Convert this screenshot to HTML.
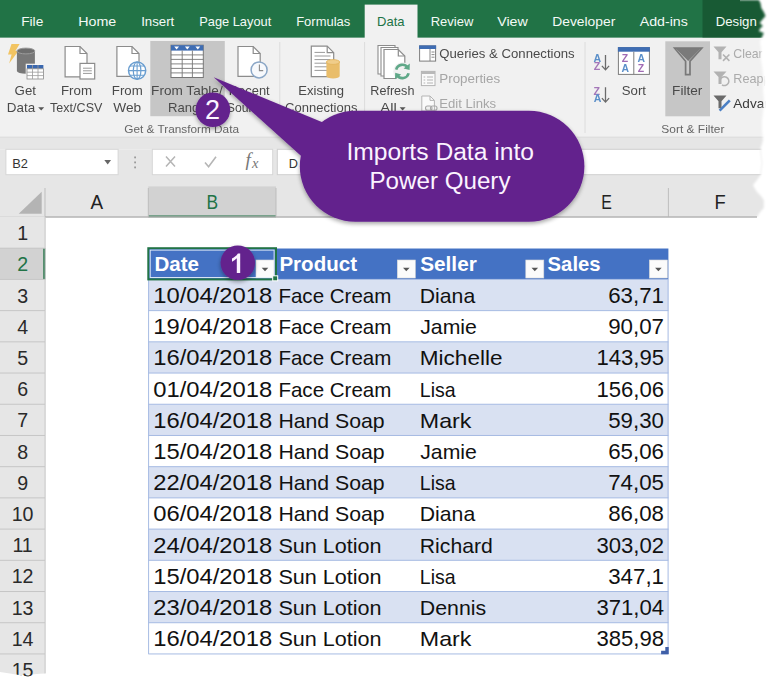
<!DOCTYPE html>
<html><head><meta charset="utf-8"><title>Excel - From Table/Range</title>
<style>
html,body{margin:0;padding:0;background:#fff;}
body{width:768px;height:684px;overflow:hidden;font-family:"Liberation Sans",sans-serif;}
svg{display:block;font-family:"Liberation Sans",sans-serif;}
</style></head><body>
<svg width="768" height="684" viewBox="0 0 768 684">
<defs><clipPath id="torn"><path d="M0,0 L758.8,0 L760.5,3 L761.3,8 L763.8,12 L765.5,16 L762,20 L759.7,23 L763,26 L760.5,28 L758.8,31 L763.8,33 L762,37 L760,42 L761.2,50 L760.6,58 L762,66 L763,74 L763.6,82 L763,90 L764,100 L763.4,110 L762,120 L762,130 L763,140 L762,144 L760.5,148 L761,156 L762,163 L761,170 L760.5,175 L757,180 L753,185 L754.5,188 L757,192 L761,196 L763.8,200 L763.8,208 L761,211 L758.8,214 L757,217.5 L0,217.5 Z"/></clipPath><filter id="eb" x="-5%" y="-5%" width="110%" height="110%"><feGaussianBlur stdDeviation="1.1"/></filter><mask id="tornm" maskUnits="userSpaceOnUse" x="0" y="0" width="768" height="684"><rect x="0" y="0" width="740" height="217.5" fill="#fff"/><path d="M0,0 L758.8,0 L760.5,3 L761.3,8 L763.8,12 L765.5,16 L762,20 L759.7,23 L763,26 L760.5,28 L758.8,31 L763.8,33 L762,37 L760,42 L761.2,50 L760.6,58 L762,66 L763,74 L763.6,82 L763,90 L764,100 L763.4,110 L762,120 L762,130 L763,140 L762,144 L760.5,148 L761,156 L762,163 L761,170 L760.5,175 L757,180 L753,185 L754.5,188 L757,192 L761,196 L763.8,200 L763.8,208 L761,211 L758.8,214 L757,217.5 L0,217.5 Z" fill="#fff" filter="url(#eb)"/></mask><filter id="sh" x="-20%" y="-20%" width="140%" height="150%"><feGaussianBlur in="SourceAlpha" stdDeviation="2.2"/><feOffset dx="0" dy="2"/><feComponentTransfer><feFuncA type="linear" slope="0.36"/></feComponentTransfer><feMerge><feMergeNode/><feMergeNode in="SourceGraphic"/></feMerge></filter><filter id="soft"><feGaussianBlur stdDeviation="0.35"/></filter></defs>
<rect x="0.00" y="0.00" width="768.00" height="684.00" fill="#fff" />
<g mask="url(#tornm)">
<rect x="0.00" y="0.00" width="768.00" height="37.80" fill="#217346" />
<rect x="702.50" y="0.00" width="70.00" height="37.80" fill="#185a34" />
<rect x="0.00" y="37.80" width="768.00" height="99.00" fill="#f1f1f1" />
<rect x="364.70" y="4.60" width="52.80" height="34.00" fill="#f1f1f1" />
<rect x="0.00" y="136.70" width="768.00" height="12.60" fill="#e6e6e6" />
<line x1="0.00" y1="137.20" x2="768.00" y2="137.20" stroke="#dcdcdc" stroke-width="1" />
<rect x="0.00" y="149.30" width="768.00" height="25.70" fill="#e6e6e6" />
<rect x="0.00" y="175.00" width="768.00" height="42.20" fill="#e6e6e6" />
</g>
<text x="21.20" y="25.60" font-size="12.6" fill="#f4faf6" font-weight="normal" text-anchor="start" textLength="22.10" lengthAdjust="spacingAndGlyphs" >File</text>
<text x="78.20" y="25.60" font-size="12.6" fill="#f4faf6" font-weight="normal" text-anchor="start" textLength="38.10" lengthAdjust="spacingAndGlyphs" >Home</text>
<text x="141.20" y="25.60" font-size="12.6" fill="#f4faf6" font-weight="normal" text-anchor="start" textLength="33.10" lengthAdjust="spacingAndGlyphs" >Insert</text>
<text x="199.20" y="25.60" font-size="12.6" fill="#f4faf6" font-weight="normal" text-anchor="start" textLength="72.10" lengthAdjust="spacingAndGlyphs" >Page Layout</text>
<text x="296.20" y="25.60" font-size="12.6" fill="#f4faf6" font-weight="normal" text-anchor="start" textLength="54.10" lengthAdjust="spacingAndGlyphs" >Formulas</text>
<text x="430.70" y="25.60" font-size="12.6" fill="#f4faf6" font-weight="normal" text-anchor="start" textLength="42.60" lengthAdjust="spacingAndGlyphs" >Review</text>
<text x="497.20" y="25.60" font-size="12.6" fill="#f4faf6" font-weight="normal" text-anchor="start" textLength="30.60" lengthAdjust="spacingAndGlyphs" >View</text>
<text x="552.20" y="25.60" font-size="12.6" fill="#f4faf6" font-weight="normal" text-anchor="start" textLength="63.10" lengthAdjust="spacingAndGlyphs" >Developer</text>
<text x="639.70" y="25.60" font-size="12.6" fill="#f4faf6" font-weight="normal" text-anchor="start" textLength="48.10" lengthAdjust="spacingAndGlyphs" >Add-ins</text>
<text x="715.70" y="25.60" font-size="12.6" fill="#f4faf6" font-weight="normal" text-anchor="start" textLength="41.10" lengthAdjust="spacingAndGlyphs" >Design</text>
<text x="377.00" y="25.60" font-size="12.6" fill="#217346" font-weight="normal" text-anchor="start" textLength="27.50" lengthAdjust="spacingAndGlyphs" >Data</text>
<rect x="5.90" y="149.30" width="112.20" height="25.40" fill="#fff" stroke="#d6d6d6" stroke-width="1"/>
<text x="12.30" y="167.50" font-size="12.4" fill="#333" font-weight="normal" text-anchor="start" textLength="15.70" lengthAdjust="spacingAndGlyphs" >B2</text>
<path d="M104.3,160 l6.8,0 l-3.4,4.4z" fill="#666"/>
<rect x="134.20" y="156.50" width="1.80" height="1.80" fill="#9a9a9a" />
<rect x="134.20" y="161.50" width="1.80" height="1.80" fill="#9a9a9a" />
<rect x="134.20" y="166.50" width="1.80" height="1.80" fill="#9a9a9a" />
<rect x="152.30" y="149.30" width="120.40" height="25.40" fill="#fff" stroke="#d6d6d6" stroke-width="1"/>
<path d="M166,156.5 l9,10 M175,156.5 l-9,10" stroke="#b5b5b5" stroke-width="1.5" fill="none"/>
<path d="M205,162.5 l3.6,4.2 l7.4,-10" stroke="#b5b5b5" stroke-width="1.6" fill="none"/>
<text x="245.60" y="166.40" font-size="19" fill="#777" font-weight="normal" text-anchor="start"  font-style="italic" font-family="Liberation Serif">f</text>
<text x="252.00" y="167.80" font-size="14.5" fill="#777" font-weight="normal" text-anchor="start"  font-style="italic" font-family="Liberation Serif">x</text>
<g mask="url(#tornm)">
<rect x="277.30" y="149.30" width="500.00" height="25.40" fill="#fff" stroke="#cfcfcf" stroke-width="1"/>
</g>
<text x="288.80" y="167.50" font-size="12.4" fill="#333" font-weight="normal" text-anchor="start" textLength="9.20" lengthAdjust="spacingAndGlyphs" >D</text>
<rect x="148.30" y="186.40" width="127.70" height="30.80" fill="#d2d2d2" />
<line x1="148.30" y1="216.40" x2="276.00" y2="216.40" stroke="#217346" stroke-width="1.7" />
<line x1="45.00" y1="188.00" x2="45.00" y2="217.00" stroke="#bdbdbd" stroke-width="1" />
<line x1="148.30" y1="188.00" x2="148.30" y2="217.00" stroke="#bdbdbd" stroke-width="1" />
<line x1="276.00" y1="188.00" x2="276.00" y2="217.00" stroke="#bdbdbd" stroke-width="1" />
<line x1="416.50" y1="188.00" x2="416.50" y2="217.00" stroke="#bdbdbd" stroke-width="1" />
<line x1="543.50" y1="188.00" x2="543.50" y2="217.00" stroke="#bdbdbd" stroke-width="1" />
<line x1="668.40" y1="188.00" x2="668.40" y2="217.00" stroke="#bdbdbd" stroke-width="1" />
<line x1="0.00" y1="217.00" x2="45.00" y2="217.00" stroke="#d0d0d0" stroke-width="1" />
<line x1="45.00" y1="217.00" x2="757.00" y2="217.00" stroke="#b4b4b4" stroke-width="1.3" />
<path d="M41.7,191.7 L41.7,213.8 L18.7,213.8 Z" fill="#b4b4b4"/>
<text x="90.60" y="209.10" font-size="20" fill="#222" font-weight="normal" text-anchor="start" textLength="12.60" lengthAdjust="spacingAndGlyphs" >A</text>
<text x="206.50" y="209.10" font-size="20" fill="#217346" font-weight="normal" text-anchor="start" textLength="11.60" lengthAdjust="spacingAndGlyphs" >B</text>
<text x="601.30" y="209.10" font-size="20" fill="#222" font-weight="normal" text-anchor="start" textLength="10.60" lengthAdjust="spacingAndGlyphs" >E</text>
<text x="714.50" y="209.10" font-size="20" fill="#222" font-weight="normal" text-anchor="start" textLength="11.20" lengthAdjust="spacingAndGlyphs" >F</text>
<path d="M0,217 L45.3,217 L45.3,673.4 L40,673.8 L34,674.2 L28,674.6 L22,675 L16,674.4 L10,673.6 L5,672.8 L0,672 Z" fill="#e6e6e6"/>
<rect x="0.00" y="248.21" width="45.00" height="31.21" fill="#d2d2d2" />
<line x1="44.30" y1="248.21" x2="44.30" y2="279.42" stroke="#217346" stroke-width="2" />
<line x1="0.00" y1="248.21" x2="45.00" y2="248.21" stroke="#c6c6c6" stroke-width="1" />
<line x1="0.00" y1="279.42" x2="45.00" y2="279.42" stroke="#c6c6c6" stroke-width="1" />
<line x1="0.00" y1="310.63" x2="45.00" y2="310.63" stroke="#c6c6c6" stroke-width="1" />
<line x1="0.00" y1="341.84" x2="45.00" y2="341.84" stroke="#c6c6c6" stroke-width="1" />
<line x1="0.00" y1="373.05" x2="45.00" y2="373.05" stroke="#c6c6c6" stroke-width="1" />
<line x1="0.00" y1="404.26" x2="45.00" y2="404.26" stroke="#c6c6c6" stroke-width="1" />
<line x1="0.00" y1="435.47" x2="45.00" y2="435.47" stroke="#c6c6c6" stroke-width="1" />
<line x1="0.00" y1="466.68" x2="45.00" y2="466.68" stroke="#c6c6c6" stroke-width="1" />
<line x1="0.00" y1="497.89" x2="45.00" y2="497.89" stroke="#c6c6c6" stroke-width="1" />
<line x1="0.00" y1="529.10" x2="45.00" y2="529.10" stroke="#c6c6c6" stroke-width="1" />
<line x1="0.00" y1="560.31" x2="45.00" y2="560.31" stroke="#c6c6c6" stroke-width="1" />
<line x1="0.00" y1="591.52" x2="45.00" y2="591.52" stroke="#c6c6c6" stroke-width="1" />
<line x1="0.00" y1="622.73" x2="45.00" y2="622.73" stroke="#c6c6c6" stroke-width="1" />
<line x1="0.00" y1="653.94" x2="45.00" y2="653.94" stroke="#c6c6c6" stroke-width="1" />
<line x1="45.10" y1="217.00" x2="45.10" y2="673.40" stroke="#c6c6c6" stroke-width="1" />
<text x="22.60" y="240.10" font-size="19.6" fill="#2a2a2a" font-weight="normal" text-anchor="middle"  >1</text>
<text x="22.60" y="271.31" font-size="19.6" fill="#217346" font-weight="normal" text-anchor="middle"  >2</text>
<text x="22.60" y="302.52" font-size="19.6" fill="#2a2a2a" font-weight="normal" text-anchor="middle"  >3</text>
<text x="22.60" y="333.73" font-size="19.6" fill="#2a2a2a" font-weight="normal" text-anchor="middle"  >4</text>
<text x="22.60" y="364.94" font-size="19.6" fill="#2a2a2a" font-weight="normal" text-anchor="middle"  >5</text>
<text x="22.60" y="396.15" font-size="19.6" fill="#2a2a2a" font-weight="normal" text-anchor="middle"  >6</text>
<text x="22.60" y="427.36" font-size="19.6" fill="#2a2a2a" font-weight="normal" text-anchor="middle"  >7</text>
<text x="22.60" y="458.57" font-size="19.6" fill="#2a2a2a" font-weight="normal" text-anchor="middle"  >8</text>
<text x="22.60" y="489.78" font-size="19.6" fill="#2a2a2a" font-weight="normal" text-anchor="middle"  >9</text>
<text x="22.60" y="520.99" font-size="19.6" fill="#2a2a2a" font-weight="normal" text-anchor="middle"  >10</text>
<text x="22.60" y="552.20" font-size="19.6" fill="#2a2a2a" font-weight="normal" text-anchor="middle"  >11</text>
<text x="22.60" y="583.41" font-size="19.6" fill="#2a2a2a" font-weight="normal" text-anchor="middle"  >12</text>
<text x="22.60" y="614.62" font-size="19.6" fill="#2a2a2a" font-weight="normal" text-anchor="middle"  >13</text>
<text x="22.60" y="645.83" font-size="19.6" fill="#2a2a2a" font-weight="normal" text-anchor="middle"  >14</text>
<clipPath id="botclip"><path d="M0,640 H60 V673.6 L34,675 L28,676.6 L22,675.6 L10,673.6 L0,672 Z"/></clipPath>
<g clip-path="url(#botclip)">
<text x="22.60" y="677.04" font-size="19.6" fill="#2a2a2a" font-weight="normal" text-anchor="middle"  >15</text>
</g>
<rect x="148.30" y="248.51" width="520.10" height="30.91" fill="#4472c4" />
<rect x="148.30" y="279.42" width="520.10" height="31.21" fill="#d9e1f2" />
<rect x="148.30" y="341.84" width="520.10" height="31.21" fill="#d9e1f2" />
<rect x="148.30" y="404.26" width="520.10" height="31.21" fill="#d9e1f2" />
<rect x="148.30" y="466.68" width="520.10" height="31.21" fill="#d9e1f2" />
<rect x="148.30" y="529.10" width="520.10" height="31.21" fill="#d9e1f2" />
<rect x="148.30" y="591.52" width="520.10" height="31.21" fill="#d9e1f2" />
<line x1="148.30" y1="279.42" x2="668.40" y2="279.42" stroke="#a6bbe3" stroke-width="1" />
<line x1="148.30" y1="310.63" x2="668.40" y2="310.63" stroke="#a6bbe3" stroke-width="1" />
<line x1="148.30" y1="341.84" x2="668.40" y2="341.84" stroke="#a6bbe3" stroke-width="1" />
<line x1="148.30" y1="373.05" x2="668.40" y2="373.05" stroke="#a6bbe3" stroke-width="1" />
<line x1="148.30" y1="404.26" x2="668.40" y2="404.26" stroke="#a6bbe3" stroke-width="1" />
<line x1="148.30" y1="435.47" x2="668.40" y2="435.47" stroke="#a6bbe3" stroke-width="1" />
<line x1="148.30" y1="466.68" x2="668.40" y2="466.68" stroke="#a6bbe3" stroke-width="1" />
<line x1="148.30" y1="497.89" x2="668.40" y2="497.89" stroke="#a6bbe3" stroke-width="1" />
<line x1="148.30" y1="529.10" x2="668.40" y2="529.10" stroke="#a6bbe3" stroke-width="1" />
<line x1="148.30" y1="560.31" x2="668.40" y2="560.31" stroke="#a6bbe3" stroke-width="1" />
<line x1="148.30" y1="591.52" x2="668.40" y2="591.52" stroke="#a6bbe3" stroke-width="1" />
<line x1="148.30" y1="622.73" x2="668.40" y2="622.73" stroke="#a6bbe3" stroke-width="1" />
<line x1="148.30" y1="653.94" x2="668.40" y2="653.94" stroke="#a6bbe3" stroke-width="1" />
<line x1="148.60" y1="279.42" x2="148.60" y2="653.94" stroke="#a6bbe3" stroke-width="1" />
<line x1="668.10" y1="279.42" x2="668.10" y2="653.94" stroke="#a6bbe3" stroke-width="1" />
<text x="154.40" y="271.11" font-size="20.6" fill="#fff" font-weight="bold" text-anchor="start" textLength="44.60" lengthAdjust="spacingAndGlyphs" >Date</text>
<text x="279.40" y="271.11" font-size="20.6" fill="#fff" font-weight="bold" text-anchor="start" textLength="77.60" lengthAdjust="spacingAndGlyphs" >Product</text>
<text x="420.20" y="271.11" font-size="20.6" fill="#fff" font-weight="bold" text-anchor="start" textLength="56.60" lengthAdjust="spacingAndGlyphs" >Seller</text>
<text x="547.60" y="271.11" font-size="20.6" fill="#fff" font-weight="bold" text-anchor="start" textLength="53.00" lengthAdjust="spacingAndGlyphs" >Sales</text>
<rect x="256.00" y="260.01" width="18.00" height="18.00" fill="#fbfbfb" stroke="#d9d9d9" stroke-width="0.6"/>
<path d="M261.70,267.71 l6.6,0 l-3.3,3.6 z" fill="#555"/>
<rect x="397.30" y="260.01" width="18.00" height="18.00" fill="#fbfbfb" stroke="#d9d9d9" stroke-width="0.6"/>
<path d="M403.00,267.71 l6.6,0 l-3.3,3.6 z" fill="#555"/>
<rect x="525.80" y="260.01" width="18.00" height="18.00" fill="#fbfbfb" stroke="#d9d9d9" stroke-width="0.6"/>
<path d="M531.50,267.71 l6.6,0 l-3.3,3.6 z" fill="#555"/>
<rect x="649.40" y="260.01" width="18.00" height="18.00" fill="#fbfbfb" stroke="#d9d9d9" stroke-width="0.6"/>
<path d="M655.10,267.71 l6.6,0 l-3.3,3.6 z" fill="#555"/>
<text x="153.20" y="303.02" font-size="21.5" fill="#111" font-weight="normal" text-anchor="start" textLength="119.00" lengthAdjust="spacingAndGlyphs" >10/04/2018</text>
<text x="278.40" y="302.92" font-size="20.4" fill="#111" font-weight="normal" text-anchor="start" textLength="113.00" lengthAdjust="spacingAndGlyphs" >Face Cream</text>
<text x="419.80" y="302.92" font-size="20.4" fill="#111" font-weight="normal" text-anchor="start" textLength="55.40" lengthAdjust="spacingAndGlyphs" >Diana</text>
<text x="664.00" y="303.02" font-size="21.5" fill="#111" font-weight="normal" text-anchor="end" textLength="55.80" lengthAdjust="spacingAndGlyphs" >63,71</text>
<text x="153.20" y="334.23" font-size="21.5" fill="#111" font-weight="normal" text-anchor="start" textLength="119.00" lengthAdjust="spacingAndGlyphs" >19/04/2018</text>
<text x="278.40" y="334.13" font-size="20.4" fill="#111" font-weight="normal" text-anchor="start" textLength="113.00" lengthAdjust="spacingAndGlyphs" >Face Cream</text>
<text x="420.20" y="334.13" font-size="20.4" fill="#111" font-weight="normal" text-anchor="start" textLength="56.70" lengthAdjust="spacingAndGlyphs" >Jamie</text>
<text x="664.00" y="334.23" font-size="21.5" fill="#111" font-weight="normal" text-anchor="end" textLength="55.80" lengthAdjust="spacingAndGlyphs" >90,07</text>
<text x="153.20" y="365.44" font-size="21.5" fill="#111" font-weight="normal" text-anchor="start" textLength="119.00" lengthAdjust="spacingAndGlyphs" >16/04/2018</text>
<text x="278.40" y="365.34" font-size="20.4" fill="#111" font-weight="normal" text-anchor="start" textLength="113.00" lengthAdjust="spacingAndGlyphs" >Face Cream</text>
<text x="419.80" y="365.34" font-size="20.4" fill="#111" font-weight="normal" text-anchor="start" textLength="82.70" lengthAdjust="spacingAndGlyphs" >Michelle</text>
<text x="664.00" y="365.44" font-size="21.5" fill="#111" font-weight="normal" text-anchor="end" textLength="67.60" lengthAdjust="spacingAndGlyphs" >143,95</text>
<text x="153.20" y="396.65" font-size="21.5" fill="#111" font-weight="normal" text-anchor="start" textLength="119.00" lengthAdjust="spacingAndGlyphs" >01/04/2018</text>
<text x="278.40" y="396.55" font-size="20.4" fill="#111" font-weight="normal" text-anchor="start" textLength="113.00" lengthAdjust="spacingAndGlyphs" >Face Cream</text>
<text x="419.80" y="396.55" font-size="20.4" fill="#111" font-weight="normal" text-anchor="start" textLength="35.80" lengthAdjust="spacingAndGlyphs" >Lisa</text>
<text x="664.00" y="396.65" font-size="21.5" fill="#111" font-weight="normal" text-anchor="end" textLength="67.60" lengthAdjust="spacingAndGlyphs" >156,06</text>
<text x="153.20" y="427.86" font-size="21.5" fill="#111" font-weight="normal" text-anchor="start" textLength="119.00" lengthAdjust="spacingAndGlyphs" >16/04/2018</text>
<text x="278.40" y="427.76" font-size="20.4" fill="#111" font-weight="normal" text-anchor="start" textLength="106.30" lengthAdjust="spacingAndGlyphs" >Hand Soap</text>
<text x="419.80" y="427.76" font-size="20.4" fill="#111" font-weight="normal" text-anchor="start" textLength="51.60" lengthAdjust="spacingAndGlyphs" >Mark</text>
<text x="664.00" y="427.86" font-size="21.5" fill="#111" font-weight="normal" text-anchor="end" textLength="55.80" lengthAdjust="spacingAndGlyphs" >59,30</text>
<text x="153.20" y="459.07" font-size="21.5" fill="#111" font-weight="normal" text-anchor="start" textLength="119.00" lengthAdjust="spacingAndGlyphs" >15/04/2018</text>
<text x="278.40" y="458.97" font-size="20.4" fill="#111" font-weight="normal" text-anchor="start" textLength="106.30" lengthAdjust="spacingAndGlyphs" >Hand Soap</text>
<text x="420.20" y="458.97" font-size="20.4" fill="#111" font-weight="normal" text-anchor="start" textLength="56.70" lengthAdjust="spacingAndGlyphs" >Jamie</text>
<text x="664.00" y="459.07" font-size="21.5" fill="#111" font-weight="normal" text-anchor="end" textLength="55.80" lengthAdjust="spacingAndGlyphs" >65,06</text>
<text x="153.20" y="490.28" font-size="21.5" fill="#111" font-weight="normal" text-anchor="start" textLength="119.00" lengthAdjust="spacingAndGlyphs" >22/04/2018</text>
<text x="278.40" y="490.18" font-size="20.4" fill="#111" font-weight="normal" text-anchor="start" textLength="106.30" lengthAdjust="spacingAndGlyphs" >Hand Soap</text>
<text x="419.80" y="490.18" font-size="20.4" fill="#111" font-weight="normal" text-anchor="start" textLength="35.80" lengthAdjust="spacingAndGlyphs" >Lisa</text>
<text x="664.00" y="490.28" font-size="21.5" fill="#111" font-weight="normal" text-anchor="end" textLength="55.80" lengthAdjust="spacingAndGlyphs" >74,05</text>
<text x="153.20" y="521.49" font-size="21.5" fill="#111" font-weight="normal" text-anchor="start" textLength="119.00" lengthAdjust="spacingAndGlyphs" >06/04/2018</text>
<text x="278.40" y="521.39" font-size="20.4" fill="#111" font-weight="normal" text-anchor="start" textLength="106.30" lengthAdjust="spacingAndGlyphs" >Hand Soap</text>
<text x="419.80" y="521.39" font-size="20.4" fill="#111" font-weight="normal" text-anchor="start" textLength="55.40" lengthAdjust="spacingAndGlyphs" >Diana</text>
<text x="664.00" y="521.49" font-size="21.5" fill="#111" font-weight="normal" text-anchor="end" textLength="55.80" lengthAdjust="spacingAndGlyphs" >86,08</text>
<text x="153.20" y="552.70" font-size="21.5" fill="#111" font-weight="normal" text-anchor="start" textLength="119.00" lengthAdjust="spacingAndGlyphs" >24/04/2018</text>
<text x="278.40" y="552.60" font-size="20.4" fill="#111" font-weight="normal" text-anchor="start" textLength="103.20" lengthAdjust="spacingAndGlyphs" >Sun Lotion</text>
<text x="419.80" y="552.60" font-size="20.4" fill="#111" font-weight="normal" text-anchor="start" textLength="73.00" lengthAdjust="spacingAndGlyphs" >Richard</text>
<text x="664.00" y="552.70" font-size="21.5" fill="#111" font-weight="normal" text-anchor="end" textLength="67.60" lengthAdjust="spacingAndGlyphs" >303,02</text>
<text x="153.20" y="583.91" font-size="21.5" fill="#111" font-weight="normal" text-anchor="start" textLength="119.00" lengthAdjust="spacingAndGlyphs" >15/04/2018</text>
<text x="278.40" y="583.81" font-size="20.4" fill="#111" font-weight="normal" text-anchor="start" textLength="103.20" lengthAdjust="spacingAndGlyphs" >Sun Lotion</text>
<text x="419.80" y="583.81" font-size="20.4" fill="#111" font-weight="normal" text-anchor="start" textLength="35.80" lengthAdjust="spacingAndGlyphs" >Lisa</text>
<text x="664.00" y="583.91" font-size="21.5" fill="#111" font-weight="normal" text-anchor="end" textLength="55.80" lengthAdjust="spacingAndGlyphs" >347,1</text>
<text x="153.20" y="615.12" font-size="21.5" fill="#111" font-weight="normal" text-anchor="start" textLength="119.00" lengthAdjust="spacingAndGlyphs" >23/04/2018</text>
<text x="278.40" y="615.02" font-size="20.4" fill="#111" font-weight="normal" text-anchor="start" textLength="103.20" lengthAdjust="spacingAndGlyphs" >Sun Lotion</text>
<text x="419.80" y="615.02" font-size="20.4" fill="#111" font-weight="normal" text-anchor="start" textLength="66.40" lengthAdjust="spacingAndGlyphs" >Dennis</text>
<text x="664.00" y="615.12" font-size="21.5" fill="#111" font-weight="normal" text-anchor="end" textLength="67.60" lengthAdjust="spacingAndGlyphs" >371,04</text>
<text x="153.20" y="646.33" font-size="21.5" fill="#111" font-weight="normal" text-anchor="start" textLength="119.00" lengthAdjust="spacingAndGlyphs" >16/04/2018</text>
<text x="278.40" y="646.23" font-size="20.4" fill="#111" font-weight="normal" text-anchor="start" textLength="103.20" lengthAdjust="spacingAndGlyphs" >Sun Lotion</text>
<text x="419.80" y="646.23" font-size="20.4" fill="#111" font-weight="normal" text-anchor="start" textLength="51.60" lengthAdjust="spacingAndGlyphs" >Mark</text>
<text x="664.00" y="646.33" font-size="21.5" fill="#111" font-weight="normal" text-anchor="end" textLength="67.60" lengthAdjust="spacingAndGlyphs" >385,98</text>
<rect x="148.30" y="248.21" width="127.70" height="31.21" fill="none" stroke="#217346" stroke-width="2"/>
<rect x="150.20" y="250.11" width="123.90" height="27.41" fill="none" stroke="#e8f0fa" stroke-width="0.9"/>
<rect x="272.70" y="275.82" width="5.00" height="5.00" fill="#217346" stroke="#fff" stroke-width="1"/>
<path d="M668.70,646.94 V654.34 H661.10 V650.74 H665.30 V646.94 Z" fill="#3f5fa8"/>
<g mask="url(#tornm)">
<rect x="150.3" y="41" width="74.5" height="75.2" fill="#c6c6c6"/>
<rect x="665.3" y="41.3" width="44.7" height="75" fill="#c6c6c6"/>
<line x1="279.8" y1="42" x2="279.8" y2="133" stroke="#dcdcdc" stroke-width="1"/>
<line x1="364.6" y1="42" x2="364.6" y2="133" stroke="#dcdcdc" stroke-width="1"/>
<line x1="585" y1="42" x2="585" y2="133" stroke="#dcdcdc" stroke-width="1"/>
<path d="M11.5,43.9 L19.6,43.9 L15.4,51 L18.4,51 L9.1,63.6 L11.6,54.4 L8,54.4 Z" fill="#f2c462"/>
<path d="M16.9,51 L16.9,71 A9,2.8 0 0 0 34.9,71 L34.9,51 Z" fill="#787878"/>
<ellipse cx="25.9" cy="51" rx="9" ry="2.9" fill="#6e6e6e" stroke="#9c9c9c" stroke-width="1"/>
<rect x="26.2" y="64.2" width="17.8" height="15.4" fill="#fff" stroke="#f1f1f1" stroke-width="1"/>
<rect x="27" y="65" width="16.4" height="3.8" fill="#3a67ae"/>
<rect x="27" y="68.8" width="16.4" height="10.2" fill="#fff" stroke="#8a8a8a" stroke-width="0.8"/>
<path d="M32.5,65 V79 M38,65 V79 M27,72.2 H43.4 M27,75.6 H43.4" stroke="#9a9a9a" stroke-width="0.8" fill="none"/>
<text x="14.60" y="94.70" font-size="12.6" fill="#4a4a4a" textLength="21.40" lengthAdjust="spacingAndGlyphs" >Get</text>
<text x="6.80" y="112.40" font-size="12.6" fill="#4a4a4a" textLength="28.40" lengthAdjust="spacingAndGlyphs" >Data</text>
<path d="M38.2,107.2 l6,0 l-3,3.4z" fill="#555"/>
<path d="M65.1,46.5 L80,46.5 L87,53.5 L87,76.8 L65.1,76.8 Z" fill="#fff" stroke="#8c8c8c" stroke-width="1.2" stroke-linejoin="miter"/>
<path d="M80,46.5 L80,53.5 L87,53.5" fill="none" stroke="#8c8c8c" stroke-width="1.2"/>
<rect x="80" y="63.4" width="14.7" height="15.6" fill="#fff" stroke="#8c8c8c" stroke-width="1.2"/>
<path d="M83,68.2 H91.8 M83,70.8 H91.8 M83,73.4 H91.8" stroke="#9a9a9a" stroke-width="1"/>
<text x="61.00" y="94.70" font-size="12.6" fill="#4a4a4a" textLength="31.00" lengthAdjust="spacingAndGlyphs" >From</text>
<text x="50.10" y="112.40" font-size="12.6" fill="#4a4a4a" textLength="52.30" lengthAdjust="spacingAndGlyphs" >Text/CSV</text>
<path d="M116.9,46.5 L132,46.5 L139,53.5 L139,76.4 L116.9,76.4 Z" fill="#fff" stroke="#8c8c8c" stroke-width="1.2" stroke-linejoin="miter"/>
<path d="M132,46.5 L132,53.5 L139,53.5" fill="none" stroke="#8c8c8c" stroke-width="1.2"/>
<circle cx="137.1" cy="70.6" r="8.6" fill="#fff" stroke="#6a9ed0" stroke-width="1.5"/>
<ellipse cx="137.1" cy="70.6" rx="3.8" ry="8.6" fill="none" stroke="#6a9ed0" stroke-width="1.2"/>
<path d="M128.5,70.6 H145.7 M130,66 H144.2 M130,75.2 H144.2 M137.1,62 V79.2" stroke="#6a9ed0" stroke-width="1.1" fill="none"/>
<text x="111.80" y="94.70" font-size="12.6" fill="#4a4a4a" textLength="30.90" lengthAdjust="spacingAndGlyphs" >From</text>
<text x="113.30" y="112.40" font-size="12.6" fill="#4a4a4a" textLength="27.90" lengthAdjust="spacingAndGlyphs" >Web</text>
<rect x="171" y="45.2" width="32.3" height="32.3" fill="#fff" stroke="#777" stroke-width="1"/>
<rect x="171" y="45.2" width="32.3" height="5.4" fill="#3f6db3"/>
<path d="M182.2,50.6 V77.5 M192.4,50.6 V77.5 M171,54.9 H203.3 M171,59.4 H203.3 M171,63.9 H203.3 M171,68.4 H203.3 M171,72.9 H203.3" stroke="#777" stroke-width="0.9" fill="none"/>
<path d="M174.2,46.4 l4.8,0 l-2.4,3z" fill="#fff"/>
<path d="M184.9,46.4 l4.8,0 l-2.4,3z" fill="#fff"/>
<path d="M195.4,46.4 l4.8,0 l-2.4,3z" fill="#fff"/>
<text x="151.10" y="94.70" font-size="12.6" fill="#4a4a4a" textLength="71.60" lengthAdjust="spacingAndGlyphs" >From Table/</text>
<text x="168.10" y="112.40" font-size="12.6" fill="#4a4a4a" textLength="38.60" lengthAdjust="spacingAndGlyphs" >Range</text>
<path d="M238,46.5 L253.2,46.5 L260.2,53.5 L260.2,76.4 L238,76.4 Z" fill="#fff" stroke="#8c8c8c" stroke-width="1.2" stroke-linejoin="miter"/>
<path d="M253.2,46.5 L253.2,53.5 L260.2,53.5" fill="none" stroke="#8c8c8c" stroke-width="1.2"/>
<circle cx="259.1" cy="69.9" r="8" fill="#f7f9fc" stroke="#8aa6c6" stroke-width="1.5"/>
<path d="M259.4,64.5 V70.6 H263.2" stroke="#8a8a8a" stroke-width="1.1" fill="none"/>
<text x="228.80" y="94.70" font-size="12.6" fill="#4a4a4a" textLength="40.90" lengthAdjust="spacingAndGlyphs" >Recent</text>
<text x="226.80" y="112.40" font-size="12.6" fill="#4a4a4a" textLength="44.90" lengthAdjust="spacingAndGlyphs" >Sources</text>
<path d="M311.3,46.2 L327.2,46.2 L333.7,52.7 L333.7,76.6 L311.3,76.6 Z" fill="#fff" stroke="#8c8c8c" stroke-width="1.2" stroke-linejoin="miter"/>
<path d="M327.2,46.2 L327.2,52.7 L333.7,52.7" fill="none" stroke="#8c8c8c" stroke-width="1.2"/>
<path d="M314.5,52.4 H325 M314.5,56 H330.5 M314.5,59.6 H330.5 M314.5,63.2 H330.5 M314.5,66.8 H330.5 M314.5,70.4 H330.5" stroke="#9a9a9a" stroke-width="1" fill="none"/>
<path d="M326.4,62 L326.4,76 A6.65,2.4 0 0 0 339.7,76 L339.7,62 Z" fill="#e9bd6a"/>
<ellipse cx="333.05" cy="62" rx="6.65" ry="2.4" fill="#f0cd8a" stroke="#e2b25a" stroke-width="0.8"/>
<text x="298.30" y="94.70" font-size="12.6" fill="#4a4a4a" textLength="45.70" lengthAdjust="spacingAndGlyphs" >Existing</text>
<text x="285.10" y="112.40" font-size="12.6" fill="#4a4a4a" textLength="72.30" lengthAdjust="spacingAndGlyphs" >Connections</text>
<path d="M378,45.5 H395 V74 H378 Z" fill="#fff" stroke="#8c8c8c" stroke-width="1.1"/>
<path d="M381,47.5 H398 V76 H381 Z" fill="#fff" stroke="#8c8c8c" stroke-width="1.1"/>
<path d="M384,49.5 L398.3,49.5 L404.8,56.0 L404.8,78.5 L384,78.5 Z" fill="#fff" stroke="#8c8c8c" stroke-width="1.2" stroke-linejoin="miter"/>
<path d="M398.3,49.5 L398.3,56.0 L404.8,56.0" fill="none" stroke="#8c8c8c" stroke-width="1.2"/>
<circle cx="402.4" cy="71.4" r="9.2" fill="#f1f1f1"/>
<path d="M396.2,69.6 A6.4,6.4 0 0 1 407.6,67.4" fill="none" stroke="#5fa888" stroke-width="2.6"/>
<path d="M409.8,63.6 L409.6,70 L403.6,68.4 Z" fill="#5fa888"/>
<path d="M408.6,73.2 A6.4,6.4 0 0 1 397.2,75.4" fill="none" stroke="#5fa888" stroke-width="2.6"/>
<path d="M395,79.2 L395.2,72.8 L401.2,74.4 Z" fill="#5fa888"/>
<text x="370.30" y="94.70" font-size="12.6" fill="#4a4a4a" textLength="44.10" lengthAdjust="spacingAndGlyphs" >Refresh</text>
<text x="380.30" y="112.40" font-size="12.6" fill="#4a4a4a" textLength="16.40" lengthAdjust="spacingAndGlyphs" >All</text>
<path d="M399.6,107.2 l6,0 l-3,3.4z" fill="#555"/>
<rect x="419.6" y="45.9" width="16" height="15.2" fill="#fff" stroke="#7d7d7d" stroke-width="1"/>
<rect x="419.1" y="45.4" width="17" height="3.6" fill="#3f6db3"/>
<path d="M430,49 V61.1 M431.5,52 H434.5 M431.5,54.6 H434.5 M431.5,57.2 H434.5" stroke="#7d7d7d" stroke-width="0.9" fill="none"/>
<text x="439.30" y="58.40" font-size="13" fill="#4a4a4a" textLength="135.40" lengthAdjust="spacingAndGlyphs" >Queries &amp; Connections</text>
<rect x="421.4" y="71.4" width="13.6" height="14.2" fill="#fafafa" stroke="#b4b4b4" stroke-width="1"/>
<rect x="421.4" y="71.4" width="13.6" height="2.6" fill="#b9b9b9"/>
<path d="M423.6,77 h1.6 M427,77 H433 M423.6,80 h1.6 M427,80 H433 M423.6,83 h1.6 M427,83 H433" stroke="#b4b4b4" stroke-width="1" fill="none"/>
<text x="439.30" y="83.20" font-size="13" fill="#a6a6a6" textLength="60.90" lengthAdjust="spacingAndGlyphs" >Properties</text>
<path d="M421.8,96 H430 L434.4,100.4 V111 H421.8 Z" fill="#fafafa" stroke="#b4b4b4" stroke-width="1"/>
<path d="M430,96 V100.4 H434.4" fill="none" stroke="#b4b4b4" stroke-width="1"/>
<rect x="425.5" y="106" width="6.5" height="4.2" rx="2" fill="#f1f1f1" stroke="#a8a8a8" stroke-width="1.1"/>
<rect x="430.5" y="106" width="6.5" height="4.2" rx="2" fill="none" stroke="#a8a8a8" stroke-width="1.1"/>
<text x="439.30" y="108.20" font-size="13" fill="#a6a6a6" textLength="56.90" lengthAdjust="spacingAndGlyphs" >Edit Links</text>
<text x="593.6" y="62.3" font-size="10.6" font-weight="bold" fill="#5b8fc9">A</text>
<text x="593.8" y="70.1" font-size="10.6" font-weight="bold" fill="#a476b8">Z</text>
<path d="M605.5,55.0 V69.7 M601.9,65.9 L605.5,69.9 L609.1,65.9" fill="none" stroke="#6b6b6b" stroke-width="1.3"/>
<text x="593.6" y="94.5" font-size="10.6" font-weight="bold" fill="#a476b8">Z</text>
<text x="593.8" y="102.3" font-size="10.6" font-weight="bold" fill="#5b8fc9">A</text>
<path d="M605.5,87.2 V101.9 M601.9,98.10000000000001 L605.5,102.10000000000001 L609.1,98.10000000000001" fill="none" stroke="#6b6b6b" stroke-width="1.3"/>
<rect x="618.4" y="47.6" width="31" height="26.8" fill="#fff" stroke="#7d7d7d" stroke-width="1"/>
<rect x="617.9" y="47.1" width="32" height="4.6" fill="#3f6db3"/>
<path d="M633.8,51.7 V74.4" stroke="#7d7d7d" stroke-width="1"/>
<text x="621.8" y="62" font-size="10.4" font-weight="bold" fill="#a06bb4">Z</text>
<text x="621.4" y="72.2" font-size="10.4" font-weight="bold" fill="#5b8fc9">A</text>
<text x="637.4" y="62" font-size="10.4" font-weight="bold" fill="#5b8fc9">A</text>
<text x="637.8" y="72.2" font-size="10.4" font-weight="bold" fill="#a06bb4">Z</text>
<text x="621.80" y="94.70" font-size="13" fill="#4a4a4a" textLength="24.20" lengthAdjust="spacingAndGlyphs" >Sort</text>
<path d="M674.6,48.2 H701.8 L690,61.2 V74.6 H685.6 V61.2 Z" fill="#c9c9c9" stroke="#787878" stroke-width="1.7" stroke-linejoin="miter"/>
<path d="M675.6,48.4 H700.8 L688.2,61 Z" fill="#7a7a7a"/>
<text x="672.10" y="94.70" font-size="13" fill="#4a4a4a" textLength="30.30" lengthAdjust="spacingAndGlyphs" >Filter</text>
<path d="M713.5,46.6 h13.0 l-5.0,5.6 v7.0 h-3.0 v-7.0 z" fill="#b2b2b2"/>
<path d="M723,54.5 l6.4,6.4 M729.4,54.5 l-6.4,6.4" stroke="#b2b2b2" stroke-width="1.6" fill="none"/>
<text x="733.30" y="58.40" font-size="13" fill="#ababab" textLength="29.40" lengthAdjust="spacingAndGlyphs" >Clear</text>
<path d="M713.5,71.4 h13.0 l-5.0,5.6 v7.0 h-3.0 v-7.0 z" fill="#b2b2b2"/>
<path d="M720.4,79.4 a4.4,4.4 0 1 1 1.6,5.4" stroke="#b2b2b2" stroke-width="1.5" fill="none"/>
<text x="733.30" y="83.20" font-size="13" fill="#ababab" textLength="46.40" lengthAdjust="spacingAndGlyphs" >Reapply</text>
<path d="M713.5,95.6 h13.0 l-5.0,5.6 v7.0 h-3.0 v-7.0 z" fill="#6a6a6a"/>
<path d="M719.6,110.6 L729.8,100.4" stroke="#4a7fc4" stroke-width="2.6" fill="none"/>
<text x="733.30" y="108.20" font-size="13" fill="#3a3a3a" textLength="60.40" lengthAdjust="spacingAndGlyphs" >Advanced</text>
<text x="124.30" y="132.70" font-size="11.8" fill="#666" textLength="114.70" lengthAdjust="spacingAndGlyphs" >Get &amp; Transform Data</text>
<text x="661.30" y="132.70" font-size="11.8" fill="#666" textLength="63.10" lengthAdjust="spacingAndGlyphs" >Sort &amp; Filter</text>
</g>
<g filter="url(#sh)"><path d="M355.25,110.8 H528.9499999999999 A55.45,55.45 0 0 1 528.9499999999999,221.7 H355.25 A55.45,55.45 0 0 1 355.25,110.8 Z" fill="#64228d"/><path d="M213.7,77.3 L323,122.6 L350,160 L300.6,155.6 Z" fill="#64228d"/></g>
<text x="346.4" y="160" font-size="23.5" fill="#fbf3ff" textLength="187.6" lengthAdjust="spacingAndGlyphs">Imports Data into</text>
<text x="369.5" y="188.6" font-size="23.5" fill="#fbf3ff" textLength="141" lengthAdjust="spacingAndGlyphs">Power Query</text>
<g filter="url(#sh)"><circle cx="212.9" cy="109.8" r="17.3" fill="#64228d"/></g>
<text x="212.5" y="119.3" font-size="27" fill="#fbf3ff" text-anchor="middle">2</text>
<g filter="url(#sh)"><circle cx="237.8" cy="262.8" r="17.3" fill="#64228d"/></g>
<path d="M240.2,272.9 H236.8 V258.3 C235.3,259.9 233.6,261 232,261.7 V258.5 C234.8,257.1 236.9,255.1 237.9,253.6 H240.2 Z" fill="#fbf3ff"/>
</svg>
</body></html>
